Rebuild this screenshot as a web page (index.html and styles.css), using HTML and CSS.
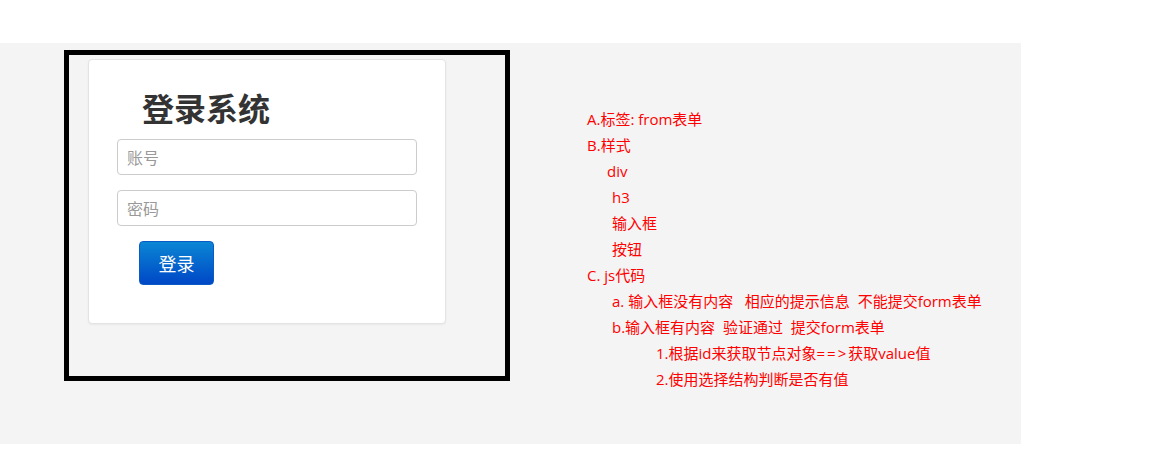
FILE: index.html
```html
<!DOCTYPE html>
<html lang="zh-CN">
<head>
<meta charset="utf-8">
<title>登录系统</title>
<link rel="stylesheet" href="styles.css">
</head>
<body>
<div class="panel">
  <div class="frame">
    <form class="card">
      <h3 class="title">登录系统</h3>
      <input class="field" type="text" placeholder="账号">
      <input class="field" type="password" placeholder="密码">
      <button class="btn" type="button">登录</button>
    </form>
  </div>
  <div class="notes">
    <div class="line">A.标签: from表单</div>
    <div class="line">B.样式</div>
    <div class="line ind1">div</div>
    <div class="line ind2">h3</div>
    <div class="line ind2">输入框</div>
    <div class="line ind2">按钮</div>
    <div class="line">C. js代码</div>
    <div class="line ind2">a. 输入框没有内容&nbsp;&nbsp;&nbsp;相应的提示信息&nbsp;&nbsp;不能提交form表单</div>
    <div class="line ind2">b.输入框有内容&nbsp;&nbsp;验证通过&nbsp;&nbsp;提交form表单</div>
    <div class="line ind3">1.根据id来获取节点对象<span class="arrow">==&gt;</span>获取value值</div>
    <div class="line ind3">2.使用选择结构判断是否有值</div>
  </div>
</div>
</body>
</html>
```
FILE: styles.css
```css
html, body {
  margin: 0;
  padding: 0;
  background: #fff;
}
body {
  font-family: "Noto Sans CJK SC", "Noto Sans", sans-serif;
}
.panel {
  margin-top: 43px;
  width: 1021px;
  height: 401px;
  background: #f4f4f4;
  display: flex;
  align-items: flex-start;
}
.frame {
  margin-left: 64px;
  margin-top: 7px;
  border: 5px solid #000;
  padding: 4px 0 0 19px;
  box-sizing: content-box;
  width: 417px;
  height: 317px;
}
.card {
  height: 263px;
  background: #fff;
  border: 1px solid #e3e3e3;
  border-radius: 4px;
  box-shadow: 0 1px 2px rgba(0,0,0,0.05);
  padding: 0 0 0 28px;
  box-sizing: content-box;
  width: 328px;
  display: flex;
  flex-direction: column;
  align-items: flex-start;
}
.title {
  margin: 27px 0 0 25px;
  font-size: 32px;
  line-height: 40px;
  font-weight: bold;
  color: #333;
}
.field {
  margin: 12px 0 0 0;
  width: 300px;
  height: 36px;
  box-sizing: border-box;
  border: 1px solid #cccccc;
  border-radius: 4px;
  padding: 0 9px;
  font-family: "Noto Sans CJK SC", "Noto Sans", sans-serif;
  font-size: 16px;
  color: #555;
  background: #fff;
  outline: none;
}
.field + .field {
  margin-top: 15px;
}
.field::placeholder {
  color: #999;
}
.btn {
  margin: 15px 0 0 22px;
  width: 75px;
  height: 44px;
  border: 1px solid #0a5bc4;
  border-radius: 4px;
  background: linear-gradient(to bottom, #0a86d4 0%, #0047c6 100%);
  color: #fff;
  font-family: "Noto Sans CJK SC", "Noto Sans", sans-serif;
  font-size: 18px;
  padding: 0;
}
.notes {
  margin-left: 77px;
  margin-top: 63px;
  color: #ff0000;
  font-size: 15px;
  font-family: "Open Sans", "Noto Sans CJK SC", sans-serif;
}
.line {
  line-height: 26px;
  height: 26px;
  white-space: nowrap;
}
.arrow {
  letter-spacing: 2px;
}
.ind1 { padding-left: 20px; }
.ind2 { padding-left: 25px; }
.ind3 { padding-left: 69px; }
```
